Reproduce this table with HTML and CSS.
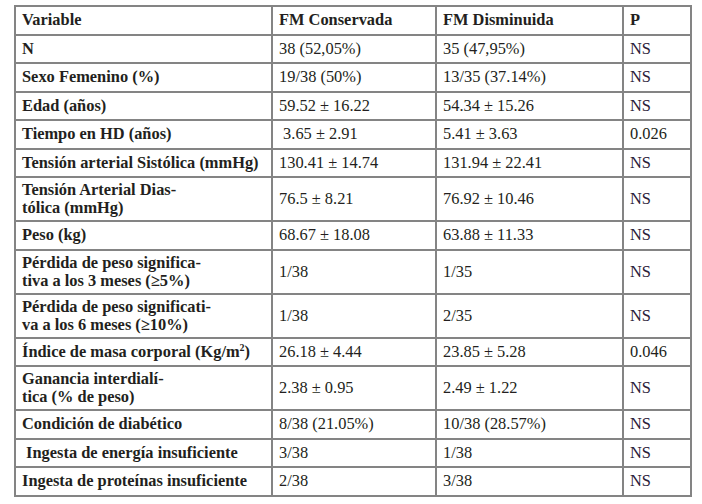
FILE: index.html
```html
<!DOCTYPE html>
<html lang="es">
<head>
<meta charset="utf-8">
<link rel="stylesheet" href="styles.css">
</head>
<body>
<div class="page">
<table class="data">
<colgroup>
<col class="c1"><col class="c2"><col class="c3"><col class="c4">
</colgroup>
<thead>
<tr><th class="first">Variable</th><th>FM Conservada</th><th>FM Disminuida</th><th>P</th></tr>
</thead>
<tbody>
<tr><th>N</th><td>38 (52,05%)</td><td>35 (47,95%)</td><td class="p">NS</td></tr>
<tr><th>Sexo Femenino (%)</th><td>19/38 (50%)</td><td>13/35 (37.14%)</td><td class="p">NS</td></tr>
<tr><th>Edad (años)</th><td>59.52 ± 16.22</td><td>54.34 ± 15.26</td><td class="p">NS</td></tr>
<tr><th>Tiempo en HD (años)</th><td>&nbsp;3.65 ± 2.91</td><td>5.41 ± 3.63</td><td>0.026</td></tr>
<tr><th>Tensión arterial Sistólica (mmHg)</th><td>130.41 ± 14.74</td><td>131.94 ± 22.41</td><td class="p">NS</td></tr>
<tr><th class="two">Tensión Arterial Dias-<br>tólica (mmHg)</th><td>76.5 ± 8.21</td><td>76.92 ± 10.46</td><td class="p">NS</td></tr>
<tr><th>Peso (kg)</th><td>68.67 ± 18.08</td><td>63.88 ± 11.33</td><td class="p">NS</td></tr>
<tr><th class="two">Pérdida de peso significa-<br>tiva a los 3 meses (≥5%)</th><td>1/38</td><td>1/35</td><td class="p">NS</td></tr>
<tr><th class="two">Pérdida de peso significati-<br>va a los 6 meses (≥10%)</th><td>1/38</td><td>2/35</td><td class="p">NS</td></tr>
<tr><th>Índice de masa corporal (Kg/m<sup>2</sup>)</th><td>26.18 ± 4.44</td><td>23.85 ± 5.28</td><td>0.046</td></tr>
<tr><th class="two">Ganancia interdialí-<br>tica (% de peso)</th><td>2.38 ± 0.95</td><td>2.49 ± 1.22</td><td class="p">NS</td></tr>
<tr><th>Condición de diabético</th><td>8/38 (21.05%)</td><td>10/38 (28.57%)</td><td class="p">NS</td></tr>
<tr><th>&nbsp;Ingesta de energía insuficiente</th><td>3/38</td><td>1/38</td><td class="p">NS</td></tr>
<tr><th>Ingesta de proteínas insuficiente</th><td>2/38</td><td>3/38</td><td class="p">NS</td></tr>
</tbody>
</table>
</div>
</body>
</html>
```
FILE: styles.css
```css
html, body {
  margin: 0;
  padding: 0;
  background: #ffffff;
  font-family: "Liberation Serif", "Times New Roman", serif;
}
.page {
  padding: 5px 0 0 14px;
}
.data {
  border-collapse: collapse;
  table-layout: fixed;
  width: 676px;
  font-family: "Liberation Serif", "Times New Roman", serif;
  font-size: 16.4px;
  line-height: 18px;
  color: #231f20;
}
.c1 { width: 257px; }
.c2 { width: 164px; }
.c3 { width: 187px; }
.c4 { width: 68px; }
.data th, .data td {
  border: 2px solid #848484;
  padding: 4.25px 5px 4.25px 6px;
  text-align: left;
  vertical-align: middle;
  white-space: nowrap;
}
.data th.two {
  padding-top: 3px;
  padding-bottom: 3px;
}
.data th {
  font-weight: bold;
}
.data td {
  font-weight: normal;
}
.data sup {
  font-size: 10px;
  line-height: 0;
  vertical-align: 6px;
}
.data .p {
  color: #2a2038;
}
```
